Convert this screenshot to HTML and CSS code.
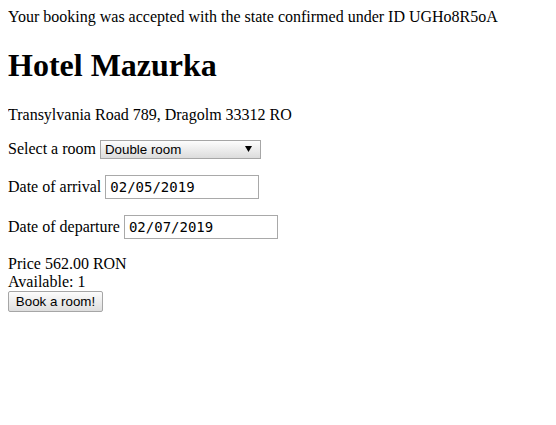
FILE: index.html
```html
<!DOCTYPE html>
<html>
<head>
<meta charset="utf-8">
<link rel="stylesheet" href="styles.css">
</head>
<body>
<div class="notice">Your booking was accepted with the state confirmed under ID UGHo8R5oA</div>
<h1 class="title">Hotel Mazurka</h1>
<p class="address">Transylvania Road 789, Dragolm 33312 RO</p>
<p class="row">Select a room <select class="room"><option>Double room</option></select></p>
<p class="row">Date of arrival <input class="date" type="text" value="02/05/2019"></p>
<p class="row">Date of departure <input class="date" type="text" value="02/07/2019"></p>
<div class="summary">Price 562.00 RON<br>Available: 1<br><button class="book">Book a room!</button></div>
</body>
</html>
```
FILE: styles.css
```css
body {
  margin: 8px;
  font-family: "Liberation Serif", "Times New Roman", serif;
  font-size: 16px;
  color: #000;
  background: #fff;
}
.title {
  font-size: 32px;
  font-weight: bold;
  margin: 21.44px 0;
}
.address, .row {
  margin: 16px 0;
}
.room {
  -webkit-appearance: none;
  appearance: none;
  box-sizing: border-box;
  width: 161px;
  height: 19px;
  margin: 0;
  padding: 0 18px 0 4px;
  font-family: "Liberation Sans", Arial, sans-serif;
  font-size: 13.33px;
  color: #000;
  border: 1px solid #a6a6a6;
  border-radius: 0;
  background-color: #f0f0f0;
  background-image: url("data:image/svg+xml;utf8,<svg xmlns='http://www.w3.org/2000/svg' width='8' height='6'><path d='M0 0h8L4 6z' fill='black'/></svg>"), linear-gradient(#fdfdfd, #dcdcdc);
  background-repeat: no-repeat, no-repeat;
  background-position: right 8px center, 0 0;
  background-size: 7px 6px, 100% 100%;
  vertical-align: baseline;
}
.date {
  box-sizing: border-box;
  width: 154px;
  height: 24px;
  margin: 0;
  padding: 1px 4px;
  font-family: "DejaVu Sans Mono", monospace;
  font-size: 14px;
  color: #000;
  border: 1px solid #a9a9a9;
  border-radius: 0;
  background: #fff;
}
.summary {
  margin: 16px 0;
}
.book {
  box-sizing: border-box;
  height: 21px;
  width: 95px;
  margin: 0;
  padding: 0 6px;
  font-family: "Liberation Sans", Arial, sans-serif;
  font-size: 13.33px;
  color: #000;
  border: 1px solid #a6a6a6;
  border-radius: 2px;
  background: linear-gradient(#fcfcfc, #dedede);
}
```
